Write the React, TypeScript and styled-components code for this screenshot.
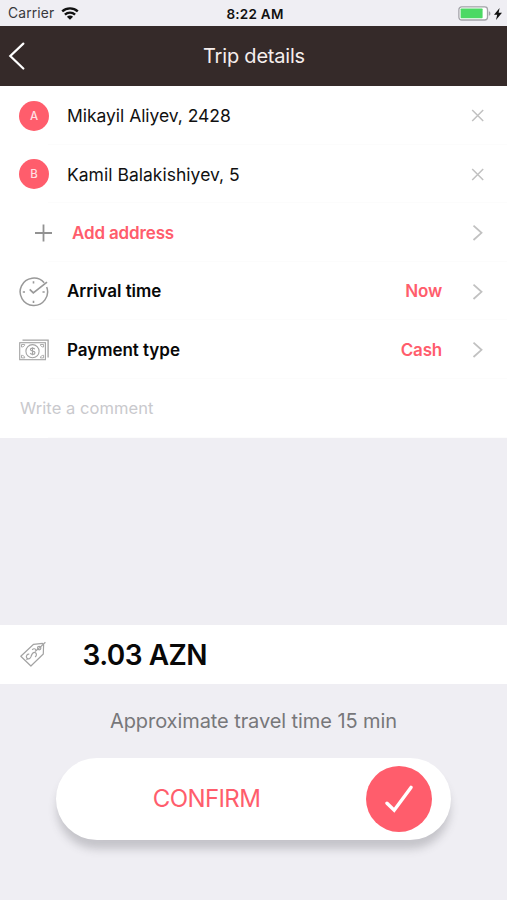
import React from 'react';
import styled, { createGlobalStyle } from 'styled-components';

const CORAL = '#ff5d6c';

const GlobalStyle = createGlobalStyle`
  * { box-sizing: border-box; }
  body { margin: 0; background: #efeef3; font-family: Inter, "Liberation Sans", sans-serif; }
  button { font-family: inherit; }
  svg { display: block; flex: none; }
`;

const Screen = styled.main`
  width: 507px;
  height: 900px;
  overflow: hidden;
  display: flex;
  flex-direction: column;
  background: #efeef3;
`;

const StatusBar = styled.div`
  height: 25.5px;
  flex: none;
  display: grid;
  grid-template-columns: 1fr auto 1fr;
  align-items: center;
  padding: 2px 5px 0 8px;
  color: #17171a;
`;

const StatusGroup = styled.div<{ $end?: boolean }>`
  display: flex;
  align-items: center;
  justify-content: ${(p) => (p.$end ? 'flex-end' : 'flex-start')};
  gap: ${(p) => (p.$end ? '3px' : '7px')};
`;

const Label = styled.span<{
  $size: number;
  $weight?: number;
  $color?: string;
  $track?: number;
}>`
  font-size: ${(p) => p.$size}px;
  font-weight: ${(p) => p.$weight ?? 400};
  color: ${(p) => p.$color ?? '#111'};
  letter-spacing: ${(p) => p.$track ?? 0}px;
  line-height: 1.2;
  white-space: nowrap;
`;

const Header = styled.header`
  height: 60.5px;
  flex: none;
  display: grid;
  grid-template-columns: 40px 1fr 40px;
  align-items: center;
  justify-items: center;
  padding: 1px 0 0 1px;
  background: #352a29;
`;

const BackButton = styled.button`
  justify-self: start;
  padding: 0 0 0 7px;
  border: 0;
  background: none;
`;

const List = styled.section`
  flex: none;
  background: #fff;
`;

const Row = styled.div`
  height: 58.6px;
  display: flex;
  align-items: center;
  padding: 1px 19px 0 19px;
  background: linear-gradient(#fcfcfc, #fcfcfc) 48px 100% / 100% 1px no-repeat;
`;

const CommentText = styled.div`
  padding-left: 1px;
`;

const Lead = styled.div<{ $wide?: boolean }>`
  width: ${(p) => (p.$wide ? 53 : 48)}px;
  padding-left: ${(p) => (p.$wide ? 15 : 0)}px;
  flex: none;
`;

const Trail = styled.div`
  margin-left: auto;
  display: flex;
  align-items: center;
`;

const Action = styled.div`
  width: 46px;
  display: flex;
  justify-content: flex-end;
  padding-right: 2px;
`;

const Pin = styled.div`
  width: 30px;
  height: 30px;
  border-radius: 50%;
  display: flex;
  align-items: center;
  justify-content: center;
  padding-top: 2px;
  background: ${CORAL};
`;

const PriceBar = styled.section`
  height: 59px;
  margin-top: 187.4px;
  flex: none;
  display: flex;
  align-items: center;
  padding: 2px 0 0 19px;
  background: #fff;
`;

const PriceIcon = styled.div`
  width: 63.5px;
  padding-bottom: 2px;
`;

const Footer = styled.footer`
  display: flex;
  flex-direction: column;
  align-items: center;
  padding-top: 25px;
`;

const ConfirmButton = styled.button`
  width: 395px;
  height: 82px;
  margin-top: 25px;
  padding: 0 19px 0 0;
  border: 0;
  border-radius: 41px;
  display: flex;
  align-items: center;
  background: #fff;
  box-shadow: 0 10px 9px -1px rgba(70, 70, 80, 0.25);
`;

const ConfirmText = styled.span`
  flex: 1;
  padding: 1px 9px 0 0;
`;

const CheckCircle = styled.span`
  width: 66px;
  height: 66px;
  border-radius: 50%;
  display: grid;
  place-items: center;
  background: ${CORAL};
`;

const WifiIcon = () => (
  <svg width="18" height="13" viewBox="0 0 18 13" fill="none" stroke="#111" strokeWidth="2.4">
    <path d="M1.2 4.4C5.7.4 12.3.4 16.8 4.4M3.9 7.6c2.9-2.6 7.3-2.6 10.2 0" />
    <path d="M5.9 9.7c1.7-1.6 4.5-1.6 6.2 0L9 12.7z" fill="#111" stroke="none" />
  </svg>
);

const BatteryIcon = () => (
  <svg width="33" height="15" viewBox="0 0 33 15">
    <rect x=".9" y=".9" width="28.6" height="13.1" rx="2.8" fill="#fff" stroke="#a3a3a8" strokeWidth="1.3" />
    <rect x="2.6" y="2.6" width="22" height="9.7" rx=".7" fill="#4cd964" />
    <path d="M30.8 5.2c2.2.7 2.2 3.9 0 4.6z" fill="#a3a3a8" />
  </svg>
);

const BoltIcon = () => (
  <svg width="8" height="12" viewBox="0 0 8 12" fill="#111">
    <path d="M5.6 0 0 6.8h3.2L2 12l6-7.2H4.6z" />
  </svg>
);

const BackIcon = () => (
  <svg width="18" height="28" viewBox="0 0 18 28" fill="none" stroke="#fff" strokeWidth="2.2" strokeLinecap="round">
    <path d="M15.3 1.6 2.3 14l13 12.5" />
  </svg>
);

const CloseIcon = () => (
  <svg width="17" height="13" viewBox="0 0 17 13" stroke="#c1c1c1" strokeWidth="1.5">
    <path d="m3.2 1 11 11m0-11-11 11" />
  </svg>
);

const ChevronIcon = () => (
  <svg width="17" height="16" viewBox="0 0 17 16" fill="none" stroke="#c1c1c1" strokeWidth="1.8">
    <path d="m4.5.7 8 7.1-8 7.2" />
  </svg>
);

const PlusIcon = () => (
  <svg width="18" height="18" viewBox="0 0 18 18" stroke="#929292" strokeWidth="1.8">
    <path d="M9.5.6v16.8M1 9h17" />
  </svg>
);

const ClockIcon = () => (
  <svg width="30" height="30" viewBox="0 0 30 30" fill="none" stroke="#999" strokeWidth="1.5">
    <path d="M25.2 5.8A13.7 13.7 0 1 0 27.7 10" />
    <path d="m10.7 12.4 3.6 3.5L28 5.2" strokeWidth="1.7" />
    <path d="M14.5 4.2v2.2M14.5 23.7v2.2M3.8 15H6M23.5 15h2.2" strokeWidth="1.6" />
  </svg>
);

const CashIcon = () => (
  <svg width="30" height="22" viewBox="0 0 30 22" fill="none" stroke="#a3a3a3" strokeWidth="1.1">
    <path d="M3.5 1.1h25.6v17.4" strokeWidth="1.3" />
    <rect x=".7" y="3.7" width="25.7" height="17" />
    <path d="M2.5 8V5.5h3.2C5.7 7.2 4.2 8 2.5 8zm0 8.3v2.6h3.2c0-1.8-1.5-2.6-3.2-2.6zM24.6 8V5.5h-3.2c0 1.7 1.5 2.5 3.2 2.5zm0 8.3v2.6h-3.2c0-1.8 1.5-2.6 3.2-2.6z" strokeWidth=".9" />
    <circle cx="13.5" cy="12.2" r="6.6" />
    <path d="M15.8 10.2c-.8-1.5-4.4-1.5-4.4.4 0 2.1 4.6 1 4.6 3.1 0 2.2-4 2.2-4.8.3M13.5 8.2v8" />
  </svg>
);

const TagIcon = () => (
  <svg width="29" height="28" viewBox="0 0 29 28" fill="none" stroke="#a3a3a3" strokeWidth="1.2" strokeLinejoin="round">
    <path d="M1.8 16.2 14.6 4.3l8.8-.9 1.2 1.3-.3 9.3-12.4 12L1.8 16.2z" />
    <circle cx="20.2" cy="8.1" r="1.7" />
    <path d="m20.2 8.1 6.2-5.8" />
    <path d="M10.3 14.3c-1.9-.6-3.7 1.8-2.6 3.6 1.2 1.9 3.4 1 4.2-1 .8-2.2 1.3-4.7 3.6-4.6 2.2.2 2.7 3.2.6 4.7M7.5 19.8l1.4-1.4M16 11.5l4.2-3.4M13.2 9.8c1.2-1.5 3.2-1.3 3.8.2" />
  </svg>
);

const CheckIcon = () => (
  <svg width="28" height="28" viewBox="0 0 28 28" fill="none" stroke="#fff" strokeWidth="3.4" strokeLinecap="round" strokeLinejoin="miter">
    <path d="m2 18.3 7.2 6.9L26 2.4" />
  </svg>
);

const stops = [
  { pin: 'A', name: 'Mikayil Aliyev, 2428', track: -0.04 },
  { pin: 'B', name: 'Kamil Balakishiyev, 5', track: 0.02 },
];

const options = [
  { icon: <ClockIcon />, name: 'Arrival time', value: 'Now' },
  { icon: <CashIcon />, name: 'Payment type', value: 'Cash' },
];

export default function App() {
  return (
    <Screen>
      <GlobalStyle />
      <StatusBar>
        <StatusGroup>
          <Label $size={13.8} $color="#38383b" $track={0.15}>Carrier</Label>
          <WifiIcon />
        </StatusGroup>
        <Label $size={13.5} $weight={600} $track={0.25}>8:22 AM</Label>
        <StatusGroup $end>
          <BatteryIcon />
          <BoltIcon />
        </StatusGroup>
      </StatusBar>

      <Header>
        <BackButton aria-label="Back"><BackIcon /></BackButton>
        <Label $size={20} $color="#f6eeed" $track={-0.2}>Trip details</Label>
      </Header>

      <List>
        {stops.map((stop) => (
          <Row key={stop.pin}>
            <Lead><Pin><Label $size={11.5} $weight={500} $color="#ffdfe2">{stop.pin}</Label></Pin></Lead>
            <Label $size={17.5} $track={stop.track}>{stop.name}</Label>
            <Trail><Action><CloseIcon /></Action></Trail>
          </Row>
        ))}
        <Row>
          <Lead $wide><PlusIcon /></Lead>
          <Label $size={17} $weight={600} $color={CORAL} $track={-0.15}>Add address</Label>
          <Trail><Action><ChevronIcon /></Action></Trail>
        </Row>
        {options.map((option) => (
          <Row key={option.name}>
            <Lead>{option.icon}</Lead>
            <Label $size={17} $weight={600} $color="#080808" $track={-0.04}>{option.name}</Label>
            <Trail>
              <Label $size={17} $weight={600} $color={CORAL} $track={-0.2}>{option.value}</Label>
              <Action><ChevronIcon /></Action>
            </Trail>
          </Row>
        ))}
        <Row>
          <CommentText>
            <Label $size={16.5} $color="#c9c9cd" $track={0.06}>Write a comment</Label>
          </CommentText>
        </Row>
      </List>

      <PriceBar>
        <PriceIcon><TagIcon /></PriceIcon>
        <Label $size={28} $weight={600} $color="#080808" $track={-0.5}>3.03 AZN</Label>
      </PriceBar>

      <Footer>
        <Label $size={20} $color="#77777a" $track={-0.08}>Approximate travel time 15 min</Label>
        <ConfirmButton>
          <ConfirmText>
            <Label $size={24} $color={CORAL} $track={-0.6}>CONFIRM</Label>
          </ConfirmText>
          <CheckCircle><CheckIcon /></CheckCircle>
        </ConfirmButton>
      </Footer>
    </Screen>
  );
}
